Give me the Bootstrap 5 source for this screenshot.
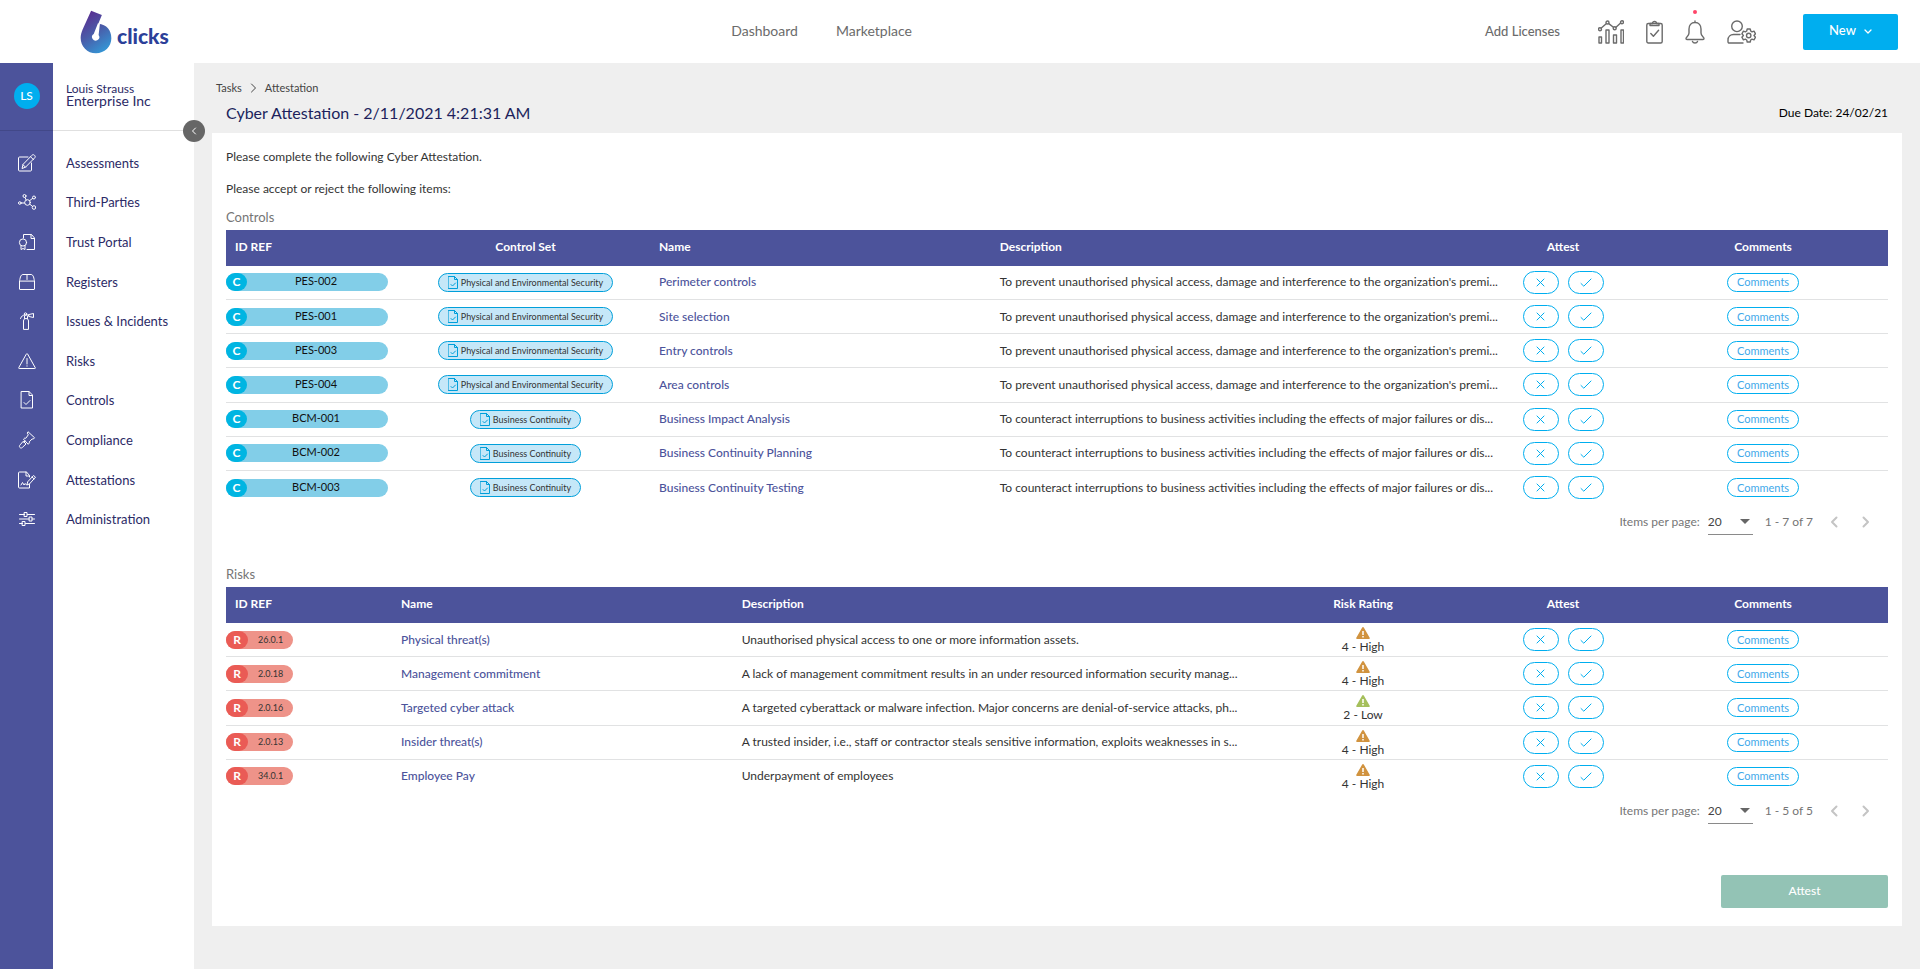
<!DOCTYPE html>
<html lang="en">
<head>
<meta charset="utf-8">
<meta name="viewport" content="width=device-width, initial-scale=1">
<title>6clicks - Cyber Attestation</title>
<link href="https://cdn.jsdelivr.net/npm/bootstrap@5.3.0/dist/css/bootstrap.min.css" rel="stylesheet">
<style>
  :root { --indigo: #4c539b; --navy: #2b2a66; --sky: #00aeef; --muted: #6b6b6b; }
  body { font-family: Lato, "Liberation Sans", sans-serif; font-size: 12px; line-height: 16px; color: #333; background: #efefef; }
  a { text-decoration: none; }
  svg { display: block; flex: none; }
  .ico { fill: none; stroke: currentColor; stroke-width: 1; stroke-linecap: round; stroke-linejoin: round; }

  /* top bar */
  .topbar { min-height: 63px; padding: 0 22px 0 0; }
  .brand-col { width: 38%; flex: none; padding-left: 80px; }
  .brand-text { font-size: 21px; line-height: 24px; font-weight: 900; color: #2b4099; padding: 8px 0 0 5px; }
  .topnav { gap: 38px; padding: 0 0 2px 10px; }
  .topnav a { font-size: 14px; line-height: 20px; color: var(--muted); }
  .licenses { font-size: 13px; font-weight: 500; color: var(--muted); margin-right: 38px; padding-bottom: 2px; }
  .tool { color: var(--muted); }
  .tools { gap: 22px; margin-right: 47px; }
  .alert-dot { width: 4px; height: 4px; top: -10px; left: 8px; background: #ff4569; }
  .btn-new { width: 95px; height: 36px; border-radius: 2px; background: var(--sky); color: #fff; font-size: 13px; font-weight: 500; }
  .btn-new span { padding-bottom: 2px; }
  .btn-new:hover { background: #009bd6; color: #fff; }

  /* sidebar */
  .sidebar { width: 194px; background: linear-gradient(90deg, var(--indigo) 53px, #fff 53px); }
  .account { height: 68px; border-bottom: 1px solid rgba(0, 0, 0, .12); color: var(--navy); }
  .account .rail { padding-bottom: 2px; }
  .rail { width: 53px; flex: none; color: #fff; }
  .avatar { width: 26px; height: 26px; background: var(--sky); font-size: 12px; font-weight: 500; }
  .org { font-size: 14px; line-height: 12px; }
  .person { line-height: 12px; }
  .side-label { padding-left: 13px; }
  .side-menu { height: 396px; margin-top: 12px; }
  .side-menu a { color: var(--navy); font-size: 13px; }
  .collapse-btn { width: 22px; height: 22px; right: -11px; bottom: -12px; background: #666; color: #fff; }

  /* page */
  .page { padding: 17px 18px 42px; }
  .crumbs { font-size: 11px; padding-left: 4px; color: #444; }
  .crumbs a { color: #444; }
  .page-head { padding: 7px 14px 10px 14px; }
  .page-title { font-size: 16px; line-height: 20px; color: #201f5c; }
  .sheet { padding: 16px 14px 18px; }
  .lead-in { margin-bottom: 10px; }
  .section-title { font-size: 13px; line-height: 20px; margin-bottom: 3px; color: #757575; }

  .grid-table { table-layout: fixed; border-collapse: collapse; }
  .grid-table td { border-bottom: 1px solid #e1e2e3; white-space: nowrap; }
  .grid-table tr:last-child td { border-bottom: 0; }
  .grid-table th, .grid-table td { padding: 0; vertical-align: middle; line-height: 16px; }
  .grid-table th { height: 36px; padding-bottom: 2px; background: var(--indigo); color: #fff; font-weight: 700; }
  .grid-table th.id-col { padding-left: 9px; }
  .grid-table .c-note { padding-left: 13px; text-align: center; }
  .grid-table .c-rate { padding-right: 13px; text-align: center; }
  .grid-table td.c-rate { padding-top: 3px; }
  .grid-table .c-set { padding-right: 9px; text-align: center; }
  .grid-table td a { color: var(--indigo); font-weight: 500; }
  .controls-table { height: 274px; }
  .risks-table { height: 206px; }
  .w-id { width: 175px; } .w-set { width: 258px; } .w-name { width: 20.5%; }
  .w-rate { width: 263px; } .w-act { width: 124px; } .w-note { width: 263px; }

  .tagpill { height: 18px; line-height: 16px; border-radius: 9px; }
  .tagpill b { width: 21px; height: 18px; line-height: 18px; border-radius: 9px; color: #fff; text-align: center; }
  .tag-c { width: 162px; background: #82cee8; color: #111; font-size: 11px; }
  .tag-c b { background: #00b5e2; font-size: 12px; }
  .tag-c span { width: 138px; text-align: center; }
  .tag-r { width: 67px; background: #ee9389; font-size: 9px; color: #333; }
  .tag-r b { width: 22px; background: #ea5b55; font-size: 12px; }
  .tag-r span { margin-left: 10px; line-height: 18px; }
  .setpill { height: 19px; padding: 0 9px; gap: 3px; border: 1px solid #009fda; border-radius: 10px; background: #c5e7f8; font-size: 9px; line-height: 17px; color: #333; }
  .setpill svg { color: #009fda; }
  .votes { gap: 9px; }
  .vote { width: 36px; height: 23px; border: 1px solid var(--sky); border-radius: 12px; background: #fff; color: var(--sky); }
  .note-btn { width: 72px; height: 19px; padding: 0; border: 1px solid var(--sky); border-radius: 10px; background: #fff; color: #3fa9ea; font-size: 11px; line-height: 16px; }
  .high { color: #d1933f; } .low { color: #a5bf5b; }

  .pager { height: 32px; margin-top: 2px; padding-right: 6px; color: #757575; }
  .pager select { width: 45px; height: 26px; margin: 0 12px 0 8px; padding: 0; border: 0; border-bottom: 1px solid #8a8a8a; border-radius: 0; background: none; color: #444; font-size: 12px; line-height: 20px; appearance: none; }
  .pager .caret { right: 15px; top: 10px; border: 5px solid transparent; border-top-color: #666; border-bottom: 0; pointer-events: none; }
  .pager button { width: 32px; height: 32px; border: 0; padding: 0; background: none; color: #c4c4c4; }
  .pager-range { margin-right: 5px; }
  .gap-after { margin-bottom: 26px; }
  .btn-attest, .btn-attest:disabled { width: 167px; height: 33px; padding: 0 0 2px; border: 0; border-radius: 2px; background: #93c3b5; color: #fff; font-size: 12px; font-weight: 500; opacity: 1; }
  .submit-row { margin-top: 48px; }
</style>
</head>
<body class="min-vh-100 d-flex flex-column">

<svg width="0" height="0" class="position-absolute" aria-hidden="true">
  <symbol id="doc" viewBox="0 0 10 13"><path d="M.5.5h6l3 3v9h-9zM6.5.5v3h3M3 8.500l1.500 1.500L7.500 7"/></symbol>
  <symbol id="cross" viewBox="0 0 9 9"><path d="M1 1l7 7M8 1L1 8"/></symbol>
  <symbol id="tick" viewBox="0 0 12 9"><path d="M1 5.500L3.800 8.200L11 1"/></symbol>
  <symbol id="warn" viewBox="0 0 14 12"><path fill="currentColor" d="M6.200.6a.9.9 0 0 1 1.600 0l5.900 10.100a.85.85 0 0 1-.8 1.300H1.100a.85.85 0 0 1-.8-1.300z"/><path stroke="#fff" stroke-width="1.500" d="M7 4v4M7 9v1.500"/></symbol>
  <symbol id="prev" viewBox="0 0 8 12"><path stroke-width="2" d="M6.500 1.500L2 6l4.500 4.500"/></symbol>
  <symbol id="next" viewBox="0 0 8 12"><path stroke-width="2" d="M1.500 1.500L6 6l-4.500 4.500"/></symbol>
</svg>

<header class="topbar bg-white d-flex align-items-center">
  <a href="#" class="brand-col d-flex align-items-center" aria-label="6clicks home">
    <svg width="32" height="44" viewBox="0 0 98 134" aria-hidden="true">
      <defs><linearGradient id="lg" x1="0.200" y1="0" x2="0.700" y2="1"><stop offset="0" stop-color="#5b2a8f"/><stop offset=".5" stop-color="#4a5ba8"/><stop offset="1" stop-color="#3497d6"/></linearGradient></defs>
      <path fill="url(#lg)" d="M34 2L67 15L56 42C82 44 96 62 96 86C96 112 75 132 49 132C22 132 2 111 2 85C2 75 5 67 8 59Z"/>
      <path fill="#fff" d="M55 40l6 2L57 76a11 11 0 1 1-15-3z"/>
    </svg>
    <span class="brand-text">clicks</span>
  </a>
  <nav class="topnav d-flex flex-grow-1" aria-label="Main">
    <a href="#">Dashboard</a>
    <a href="#">Marketplace</a>
  </nav>
  <a href="#" class="licenses">Add Licenses</a>
  <div class="tools d-flex align-items-center">
    <a href="#" class="tool" aria-label="Analytics">
      <svg class="ico" width="26" height="24" viewBox="0 0 26 24"><g stroke-width="1.400"><path d="M1 17h2.500v6H1zM8 10h3v13H8zM15.500 15h3v8h-3zM23 10h2.500v13H23zM3.300 8L8.200 3.700M10.800 3.600l4.600 3.700M18 7.300l4.600-4.200"/><circle cx="2" cy="9.200" r="1.500"/><circle cx="9.500" cy="2.500" r="1.500"/><circle cx="16.700" cy="8.300" r="1.500"/><circle cx="24" cy="2.200" r="1.500"/></g></svg>
    </a>
    <a href="#" class="tool" aria-label="Tasks">
      <svg class="ico" width="17" height="24" viewBox="0 0 17 24"><g stroke-width="1.400"><rect x=".8" y="3.500" width="15.400" height="19.500" rx="1.500"/><path d="M4 5.500v-2h2.500a2 2 0 0 1 4 0H13v2zM4.800 13.500l2.600 2.800 5.200-6"/></g></svg>
    </a>
    <a href="#" class="tool position-relative" aria-label="Notifications">
      <svg class="ico" width="20" height="24" viewBox="0 0 20 24"><g stroke-width="1.400"><path d="M10 1v1.500M10 2.500C6 2.500 4 5.500 4 9v4c0 3-3 4-3 5.500 0 .6.500 1 1 1h16c.5 0 1-.4 1-1 0-1.500-3-2.500-3-5.500V9c0-3.500-2-6.500-6-6.500zM7.500 21.500a2.600 2 0 0 0 5 0"/></g></svg>
      <span class="alert-dot position-absolute rounded-circle"></span>
    </a>
    <a href="#" class="tool" aria-label="Account settings">
      <svg class="ico" width="29" height="24" viewBox="0 0 29 24"><g stroke-width="1.400"><circle cx="10" cy="6.300" r="5.300"/><path d="M16 23H2.200C1.500 23 1 22.500 1 21.800V20c0-3.500 2.500-5.500 5.500-5.500H13"/><circle cx="21.700" cy="15.500" r="2.200"/><path d="M20.200 9h3l.5 2 1.300.8 2-.6 1.500 2.600-1.500 1.700 1.500 1.700-1.500 2.600-2-.6-1.300.8-.5 2h-3l-.5-2-1.300-.8-2 .6-1.500-2.600 1.500-1.700-1.500-1.700 1.500-2.600 2 .6 1.300-.8z"/></g></svg>
    </a>
  </div>
  <button type="button" class="btn btn-new d-flex align-items-center justify-content-center gap-2 p-0"><span>New</span>
    <svg class="ico" width="8" height="5" viewBox="0 0 8 5"><path stroke-width="1.300" d="M1 1l3 3 3-3"/></svg>
  </button>
</header>

<div class="d-flex flex-grow-1">
  <aside class="sidebar flex-shrink-0">
    <div class="account d-flex position-relative align-items-center">
      <div class="rail d-flex justify-content-center"><span class="avatar rounded-circle d-flex align-items-center justify-content-center">LS</span></div>
      <div class="side-label pb-1"><div class="person">Louis Strauss</div><div class="org">Enterprise Inc</div></div>
      <button type="button" class="collapse-btn position-absolute rounded-circle border-0 p-0 d-flex align-items-center justify-content-center" aria-label="Collapse menu">
        <svg class="ico" width="6" height="8" viewBox="0 0 6 8"><path d="M4.500 1L1.500 4l3 3"/></svg>
      </button>
    </div>
    <nav class="side-menu d-flex flex-column" aria-label="Modules">
      <a href="#" class="d-flex align-items-center flex-fill"><span class="rail d-flex justify-content-center"><svg class="ico" width="18" height="18" viewBox="0 0 18 18"><path d="M10 3H1.500C1 3 .5 3.400.5 4v12c0 .6.500 1 1 1h11c.6 0 1-.4 1-1V9M14 1.200c.7-.7 1.600-.7 2.300-.1l.4.4c.7.700.7 1.600 0 2.300L7.500 13.200 4 14.500l1-3.800zM12.500 2.700l3 3M5 10.700l2.500 2.500"/></svg></span><span class="side-label">Assessments</span></a>
      <a href="#" class="d-flex align-items-center flex-fill"><span class="rail d-flex justify-content-center"><svg class="ico" width="18" height="18" viewBox="0 0 18 18"><circle cx="9.500" cy="9.500" r="2.800"/><circle cx="1.800" cy="10" r="1.300"/><circle cx="6.500" cy="3" r="1.500"/><circle cx="16" cy="4.500" r="1.500"/><circle cx="16" cy="14.500" r="1.800"/><path d="M3.100 10h3.500M7 4.500L8.200 7M14.700 5.300l-3 2.300M11.800 11.200l2.700 2.200"/></svg></span><span class="side-label">Third-Parties</span></a>
      <a href="#" class="d-flex align-items-center flex-fill"><span class="rail d-flex justify-content-center"><svg class="ico" width="18" height="18" viewBox="0 0 18 18"><path d="M5.500 5V1.500h8l3 3.500v11.500H9M13 1.500V5.500h3.500M3 12.800v3.700l2-1 2 1v-3.700"/><circle cx="5" cy="9.500" r="3.600"/></svg></span><span class="side-label">Trust Portal</span></a>
      <a href="#" class="d-flex align-items-center flex-fill"><span class="rail d-flex justify-content-center"><svg class="ico" width="18" height="18" viewBox="0 0 18 18"><path d="M1.500 8.500V16c0 .3.200.5.500.5h14c.3 0 .5-.2.500-.5V8.500zM1.500 8.500C2 5.500 2.500 1.500 5 1.500h8c2.500 0 3 4 3.500 7M9 1.500v5"/></svg></span><span class="side-label">Registers</span></a>
      <a href="#" class="d-flex align-items-center flex-fill"><span class="rail d-flex justify-content-center"><svg class="ico" width="18" height="18" viewBox="0 0 18 18"><path d="M5.500 17V9c0-1.500 1-2.500 2.500-2.500s2.500 1 2.500 2.500v8zM2.500 6.500C3.500 4 5 3 7 3h4M6.500 6.500V4M9.500 6.500V4.500M11 2.500l4.500-1v4L11 4.500z"/><circle cx="7.500" cy="2" r="1.200"/></svg></span><span class="side-label">Issues &amp; Incidents</span></a>
      <a href="#" class="d-flex align-items-center flex-fill"><span class="rail d-flex justify-content-center"><svg class="ico" width="18" height="18" viewBox="0 0 18 18"><path d="M8.400 2c.3-.5.900-.5 1.200 0l7.700 13.800c.2.400 0 .7-.5.700H1.200c-.5 0-.7-.3-.5-.7zM9 6.500v5.500M9 13.800v.4"/></svg></span><span class="side-label">Risks</span></a>
      <a href="#" class="d-flex align-items-center flex-fill"><span class="rail d-flex justify-content-center"><svg class="ico" width="18" height="18" viewBox="0 0 18 18"><path d="M3.500.5h7.500l3.500 3.500v13h-11zM11 .5V4.500h3.500M6 11.500l2 2 4-4"/></svg></span><span class="side-label">Controls</span></a>
      <a href="#" class="d-flex align-items-center flex-fill"><span class="rail d-flex justify-content-center"><svg class="ico" width="18" height="18" viewBox="0 0 18 18"><path d="M10.300 1l6.200 5.700-1.300 1.500-1-.3-3 3 .2 1L10.200 13.300 5.500 8.200 6.800 7l1 .3 2.500-3.500L9.500 2.500zM7 10l-1.200 1.200M8.500 11.500l-1.200 1.200M5.500 10.500l2.500 2.500-3.700 3.500c-.7.700-1.700.7-2.400 0s-.7-1.700 0-2.400z"/></svg></span><span class="side-label">Compliance</span></a>
      <a href="#" class="d-flex align-items-center flex-fill"><span class="rail d-flex justify-content-center"><svg class="ico" width="18" height="18" viewBox="0 0 18 18"><path d="M11.500 6V4.500l-3-3.500h-7c-.6 0-1 .4-1 1v14c0 .6.400 1 1 1h10v-3.500M8 1v4h3.500M3 14l1.500-2.500L6 14l1.200-1.500L8.500 14M9 13.500l.7-2.700L15.500 4.500l2 1.700-5.800 6.500zM14 6l2 1.800"/></svg></span><span class="side-label">Attestations</span></a>
      <a href="#" class="d-flex align-items-center flex-fill"><span class="rail d-flex justify-content-center"><svg class="ico" width="18" height="18" viewBox="0 0 18 18"><path d="M1.500 4.500h5M9.500 4.500h7M1.500 9h9.500M14 9h2.500M1.500 13.500h3M7.500 13.500h9"/><rect x="6.500" y="2.500" width="2.500" height="4"/><rect x="11.500" y="7" width="2.500" height="4"/><rect x="4.500" y="11.500" width="2.500" height="4"/></svg></span><span class="side-label">Administration</span></a>
    </nav>
  </aside>

  <main class="page flex-grow-1">
    <nav class="crumbs d-flex align-items-center" aria-label="Breadcrumb">
      <a href="#">Tasks</a>
      <svg class="ico mx-2" width="7" height="10" viewBox="0 0 7 10"><path d="M1.500 1l4 4-4 4"/></svg>
      <span>Attestation</span>
    </nav>
    <div class="page-head d-flex justify-content-between align-items-center">
      <h1 class="page-title m-0 fw-normal">Cyber Attestation - 2/11/2021 4:21:31 AM</h1>
      <span class="text-black">Due Date: 24/02/21</span>
    </div>

    <div class="sheet bg-white">
      <p class="mb-3">Please complete the following Cyber Attestation.</p>
      <p class="lead-in">Please accept or reject the following items:</p>

      <h2 class="section-title fw-normal">Controls</h2>
      <table class="grid-table controls-table w-100">
        <colgroup><col class="w-id"><col class="w-set"><col class="w-name"><col><col class="w-act"><col class="w-note"></colgroup>
        <thead><tr><th class="id-col">ID REF</th><th class="c-set">Control Set</th><th>Name</th><th>Description</th><th class="text-center">Attest</th><th class="c-note">Comments</th></tr></thead>
        <tbody id="controls-rows"></tbody>
      </table>
      <div class="pager gap-after d-flex align-items-center justify-content-end">
        <label for="size-controls">Items per page:</label>
        <div class="position-relative"><select id="size-controls"><option>20</option></select><span class="caret position-absolute"></span></div>
        <span class="pager-range">1 - 7 of 7</span>
        <button type="button" class="d-flex align-items-center justify-content-center" aria-label="Previous page"><svg class="ico" width="8" height="12"><use href="#prev"/></svg></button>
        <button type="button" class="d-flex align-items-center justify-content-center" aria-label="Next page"><svg class="ico" width="8" height="12"><use href="#next"/></svg></button>
      </div>

      <h2 class="section-title fw-normal">Risks</h2>
      <table class="grid-table risks-table w-100">
        <colgroup><col class="w-id"><col class="w-name"><col><col class="w-rate"><col class="w-act"><col class="w-note"></colgroup>
        <thead><tr><th class="id-col">ID REF</th><th>Name</th><th>Description</th><th class="c-rate">Risk Rating</th><th class="text-center">Attest</th><th class="c-note">Comments</th></tr></thead>
        <tbody id="risks-rows"></tbody>
      </table>
      <div class="pager d-flex align-items-center justify-content-end">
        <label for="size-risks">Items per page:</label>
        <div class="position-relative"><select id="size-risks"><option>20</option></select><span class="caret position-absolute"></span></div>
        <span class="pager-range">1 - 5 of 5</span>
        <button type="button" class="d-flex align-items-center justify-content-center" aria-label="Previous page"><svg class="ico" width="8" height="12"><use href="#prev"/></svg></button>
        <button type="button" class="d-flex align-items-center justify-content-center" aria-label="Next page"><svg class="ico" width="8" height="12"><use href="#next"/></svg></button>
      </div>

      <div class="submit-row d-flex justify-content-end"><button type="button" class="btn btn-attest" disabled>Attest</button></div>
    </div>
  </main>
</div>

<script src="https://cdn.jsdelivr.net/npm/bootstrap@5.3.0/dist/js/bootstrap.bundle.min.js"></script>
<script>
  const access = "To prevent unauthorised physical access, damage and interference to the organization's premi...";
  const continuity = "To counteract interruptions to business activities including the effects of major failures or dis...";
  const pes = "Physical and Environmental Security", bcm = "Business Continuity";
  const controls = [
    ["PES-002", pes, "Perimeter controls", access],
    ["PES-001", pes, "Site selection", access],
    ["PES-003", pes, "Entry controls", access],
    ["PES-004", pes, "Area controls", access],
    ["BCM-001", bcm, "Business Impact Analysis", continuity],
    ["BCM-002", bcm, "Business Continuity Planning", continuity],
    ["BCM-003", bcm, "Business Continuity Testing", continuity]
  ];
  const risks = [
    ["26.0.1", "Physical threat(s)", "Unauthorised physical access to one or more information assets.", "4 - High"],
    ["2.0.18", "Management commitment", "A lack of management commitment results in an under resourced information security manag...", "4 - High"],
    ["2.0.16", "Targeted cyber attack", "A targeted cyberattack or malware infection. Major concerns are denial-of-service attacks, ph...", "2 - Low"],
    ["2.0.13", "Insider threat(s)", "A trusted insider, i.e., staff or contractor steals sensitive information, exploits weaknesses in s...", "4 - High"],
    ["34.0.1", "Employee Pay", "Underpayment of employees", "4 - High"]
  ];
  const actions = `
    <td><div class="votes d-flex justify-content-center">
      <button type="button" class="vote d-flex align-items-center justify-content-center p-0" aria-label="Reject"><svg class="ico" width="9" height="9"><use href="#cross"/></svg></button>
      <button type="button" class="vote d-flex align-items-center justify-content-center p-0" aria-label="Accept"><svg class="ico" width="12" height="9"><use href="#tick"/></svg></button>
    </div></td>
    <td class="c-note"><button type="button" class="note-btn">Comments</button></td>`;
  document.getElementById("controls-rows").innerHTML = controls.map(([id, set, name, text]) => `<tr>
    <td><div class="tagpill tag-c d-flex"><b>C</b><span>${id}</span></div></td>
    <td class="c-set"><span class="setpill d-inline-flex align-items-center align-middle"><svg class="ico" width="10" height="13"><use href="#doc"/></svg>${set}</span></td>
    <td><a href="#">${name}</a></td><td>${text}</td>${actions}</tr>`).join("");
  document.getElementById("risks-rows").innerHTML = risks.map(([id, name, text, rating]) => `<tr>
    <td><div class="tagpill tag-r d-flex"><b>R</b><span>${id}</span></div></td>
    <td><a href="#">${name}</a></td><td>${text}</td>
    <td class="c-rate"><svg class="mx-auto ${rating === "2 - Low" ? "low" : "high"}" width="14" height="12"><use href="#warn"/></svg>${rating}</td>${actions}</tr>`).join("");
</script>
</body>
</html>
